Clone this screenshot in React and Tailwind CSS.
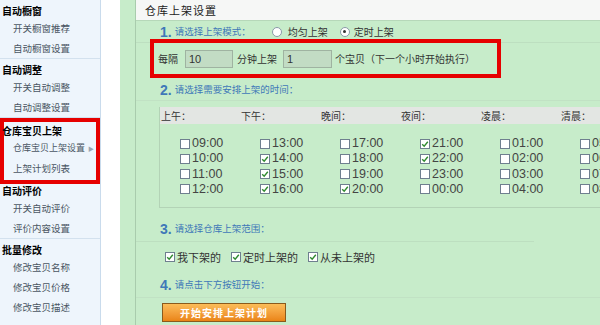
import React from 'react';

const cjk = { fontFamily: '"Noto Sans CJK SC", "Liberation Sans", sans-serif' };
const arial = { fontFamily: '"Liberation Sans", Arial, "Noto Sans CJK SC", sans-serif' };

const sideGroups = [
  { title: '自动橱窗', items: ['开关橱窗推荐', '自动橱窗设置'] },
  { title: '自动调整', items: ['开关自动调整', '自动调整设置'] },
  { title: '仓库宝贝上架', items: ['仓库宝贝上架设置', '上架计划列表'], boxed: true },
  { title: '自动评价', items: ['开关自动评价', '评价内容设置'], afterBox: true },
  { title: '批量修改', items: ['修改宝贝名称', '修改宝贝价格', '修改宝贝描述'], last: true },
];

const columns = [
  { label: '上午：', times: ['09:00', '10:00', '11:00', '12:00'] },
  { label: '下午：', times: ['13:00', '14:00', '15:00', '16:00'] },
  { label: '晚间：', times: ['17:00', '18:00', '19:00', '20:00'] },
  { label: '夜间：', times: ['21:00', '22:00', '23:00', '00:00'] },
  { label: '凌晨：', times: ['01:00', '02:00', '03:00', '04:00'] },
  { label: '清晨：', times: ['05:00', '06:00', '07:00', '08:00'] },
];

const checkedTimes = ['14:00', '15:00', '16:00', '20:00', '21:00', '22:00'];

function Box({ checked }) {
  return (
    <span className="inline-flex w-[10px] h-[10px] border border-[#6f7f8f] bg-white items-center justify-center shrink-0">
      {checked && (
        <svg width="8" height="8" viewBox="0 0 8 8">
          <path d="M1.2 4.2 L3.2 6.2 L6.8 1.8" fill="none" stroke="#2f8a2f" strokeWidth="1.4" />
        </svg>
      )}
    </span>
  );
}

function Radio({ checked }) {
  return (
    <span className="inline-flex w-[10px] h-[10px] rounded-full border border-[#8a9aa8] bg-white items-center justify-center shrink-0">
      {checked && <span className="w-[3px] h-[3px] rounded-full bg-[#333]" />}
    </span>
  );
}

function StepLabel({ n, text }) {
  return (
    <div className="flex items-center gap-[3px] text-[#3f78b8]">
      <span className="text-[14px] font-bold leading-none" style={arial}>{n}.</span>
      <span className="text-[9.5px] leading-none">{text}</span>
    </div>
  );
}

function groupClass(g) {
  if (g.boxed) return 'border-[4px] border-[#e60000] w-[100px] pt-[2px] pb-[2px]';
  if (g.afterBox) return 'border-b border-[#d3e1ee]';
  if (g.last) return 'pt-[4px]';
  return 'pt-[4px] border-b border-[#d3e1ee]';
}

export default function App() {
  return (
    <div className="w-[600px] h-[325px] overflow-hidden flex bg-white" style={cjk}>
      {/* Sidebar */}
      <div className="w-[101px] shrink-0 bg-[#eef5fc] border-r border-[#c9dbec]">
        {sideGroups.map((g) => (
          <div key={g.title} className={groupClass(g)}>
            <div className={`text-[10px] font-bold text-black h-[14px] leading-[14px] whitespace-nowrap ${g.boxed ? '-ml-[2px]' : 'pl-[2px]'}`}>
              {g.title}
            </div>
            {g.items.map((it, i) => (
              <div
                key={it}
                className={`h-[20px] flex items-center whitespace-nowrap text-[#4a5563] ${g.boxed ? 'pl-[9px]' : 'pl-[13px]'} ${g.boxed && i === 0 ? 'text-[9px]' : 'text-[9.5px]'}`}
              >
                <span>{it}</span>
                {g.boxed && i === 0 && <span className="ml-[3px] text-[6px] text-[#9aa6b2]">▶</span>}
              </div>
            ))}
          </div>
        ))}
      </div>

      {/* White gap */}
      <div className="w-[19px] shrink-0 bg-white" />

      {/* Main */}
      <div className="flex-1 bg-[#c7ecca] pl-[15px]">
        <div className="h-full border-l border-[#a9ccad] flex flex-col">
          <div className="h-[21px] shrink-0 bg-[#f6f7f6] border-b border-[#b6d8b9] flex items-center pl-[9px] text-[11px] text-[#222] tracking-[1px]">
            仓库上架设置
          </div>

          {/* Step 1 */}
          <div className="h-[22px] shrink-0 flex items-center pl-[24px] border-b border-[#bddfc0]">
            <StepLabel n="1" text="请选择上架模式：" />
            <div className="flex items-center gap-[6px] ml-[21px] text-[10px] text-[#333]">
              <Radio />
              <span>均匀上架</span>
            </div>
            <div className="flex items-center gap-[4px] ml-[12px] text-[10px] text-[#333]">
              <Radio checked />
              <span>定时上架</span>
            </div>
          </div>

          <div className="ml-[14px] -mt-[4px] w-[351px] h-[39px] shrink-0 border-[4px] border-[#e60000] flex items-center pl-[4px] text-[10px] text-[#333]">
            <span>每隔</span>
            <div className="ml-[7px] w-[48px] h-[18px] bg-[#c2dcc4] border border-[#9fb3a1] text-[11px] pl-[3px] leading-[16px]" style={arial}>10</div>
            <span className="ml-[4px]">分钟上架</span>
            <div className="ml-[6px] w-[49px] h-[18px] bg-[#c2dcc4] border border-[#9fb3a1] text-[11px] pl-[3px] leading-[16px]" style={arial}>1</div>
            <span className="ml-[3px]">个宝贝（下一个小时开始执行）</span>
          </div>

          {/* Step 2 */}
          <div className="h-[22px] shrink-0 flex items-center pl-[24px] mt-[1px] border-b border-[#c1e2c4]">
            <StepLabel n="2" text="请选择需要安排上架的时间：" />
          </div>

          <div className="ml-[23px] mt-[6px] border-l border-b border-[#b3d3b6] h-[101px] shrink-0">
            <div className="h-[17px] bg-[#e3e6e3] flex text-[10px] text-[#333]">
              {columns.map((c) => (
                <div key={c.label} className="w-[80px] shrink-0 pl-[1px] leading-[17px]">{c.label}</div>
              ))}
            </div>
            <div className="flex pt-[12px]">
              {columns.map((c) => (
                <div key={c.label} className="w-[80px] shrink-0 pl-[20px] flex flex-col">
                  {c.times.map((t) => (
                    <div key={t} className="h-[15.2px] flex items-center gap-[2px] text-[12.5px] text-[#444]" style={arial}>
                      <Box checked={checkedTimes.includes(t)} />
                      <span>{t}</span>
                    </div>
                  ))}
                </div>
              ))}
            </div>
          </div>

          {/* Step 3 */}
          <div className="h-[34px] shrink-0 flex items-center pl-[24px] pt-[9px] border-b border-[#bddfc0] w-[398px]">
            <StepLabel n="3" text="请选择仓库上架范围：" />
          </div>
          <div className="h-[30px] shrink-0 flex items-center pl-[29px] text-[11px] text-[#333]">
            <div className="flex items-center gap-[2px]"><Box checked /><span>我下架的</span></div>
            <div className="flex items-center gap-[2px] ml-[10px]"><Box checked /><span>定时上架的</span></div>
            <div className="flex items-center gap-[2px] ml-[10px]"><Box checked /><span>从未上架的</span></div>
          </div>

          {/* Step 4 */}
          <div className="h-[26px] shrink-0 flex items-center pl-[24px] border-b border-[#c1e2c4]">
            <StepLabel n="4" text="请点击下方按钮开始：" />
          </div>
          <div className="pl-[26px] pt-[5px]">
            <div className="w-[124px] h-[19px] border border-[#8a5a1c] bg-gradient-to-b from-[#fbbd58] to-[#ea8414] flex items-center justify-center text-[10px] font-bold text-white tracking-[1px]">
              开始安排上架计划
            </div>
          </div>
        </div>
      </div>
    </div>
  );
}
